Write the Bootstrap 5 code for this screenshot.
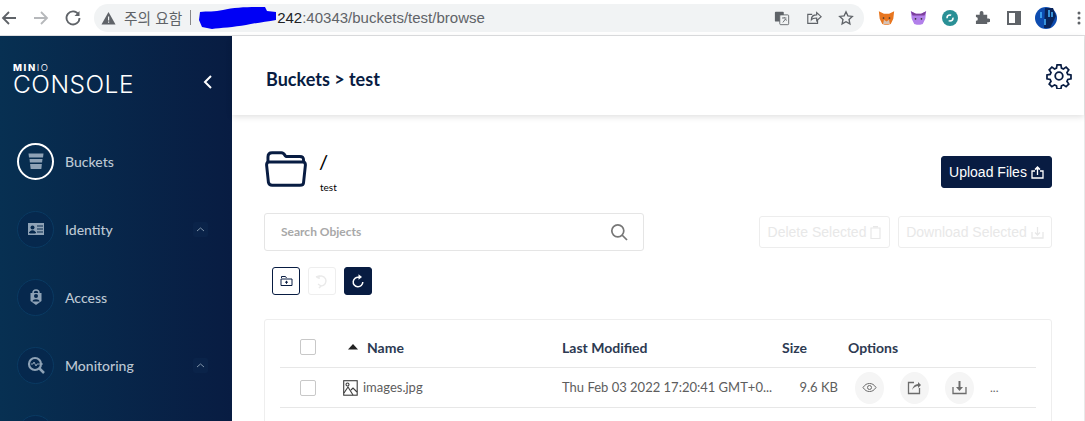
<!DOCTYPE html>
<html lang="ko"><head><meta charset="utf-8"><title>MinIO Console</title>
<link href="https://cdn.jsdelivr.net/npm/bootstrap@5.3.0/dist/css/bootstrap.min.css" rel="stylesheet">
<style>
html,body{height:421px;overflow:hidden;background:#fff;margin:0}
body{font-family:Lato,sans-serif;color:#081c42}
.chrome{height:36px;border-bottom:1px solid #dedfe1;background:#fff}
.nav-ic{width:20px;height:20px;flex:none;color:#5f6368}
.omni{margin-left:11px;width:770px;height:28px;background:#f1f3f4;border-radius:14px;font:15px "Liberation Sans",sans-serif;color:#5f6368;padding-left:7px;flex:none}
.warn-txt{font:14.7px "Noto Sans CJK KR",sans-serif;margin-left:8px;color:#5f6368;white-space:nowrap}
.sep{width:1px;height:15px;background:#888;margin:0 8px}
.url-dark{color:#202124;margin-left:1px}
.scrib{width:77px;height:22px;flex:none}
.omni-end{margin-left:auto;padding-right:10px;gap:16px}
.tool{width:16px;height:16px;flex:none}
.stage{height:385px}
.side{width:232px;flex:none;background:linear-gradient(90deg,#073052,#081c42);color:#fff;overflow:hidden}
.brand{height:74px;margin-top:17px;padding-left:13px;padding-right:19px}
.mini{font:800 9.5px/7px Inter,sans-serif;letter-spacing:1.6px}
.mini i{font-style:normal;font-weight:300}
.cons{font:300 24.5px/24px Inter,sans-serif;letter-spacing:.5px;margin-top:1px}
.menu-row{height:68px;padding:0 24px 0 17px}
.circ{width:37px;height:37px;border-radius:50%;border:1px solid #0a3a62;background:#06284d;margin-right:11px;flex:none}
.circ.on{border:2px solid #fff;background:transparent}
.circ svg{width:18px;height:18px;color:#8ea2b6}
.m-lbl{font-size:14px;color:#bcc7d3;font-weight:500}
.chev{width:15px;height:15px;background:#0a2349;border-radius:2px;color:#7f93a8}
.main{width:853px;flex:none;border-right:1px solid #e9e9e9}
.head{height:79px;box-shadow:0 2px 6px rgba(0,0,0,.12);padding:0 12px 0 34px;position:relative}
.head h1{font:700 18px Lato,sans-serif;margin:6px 0 0;color:#081c42}
.body-pad{padding:0 32px}
.title-row{padding-top:36px;height:98px}
.folder{width:44px;height:37px;margin-right:12px;flex:none}
.slash{font:500 20px/22px Lato,sans-serif;color:#000;margin:-1px 0 0 -1px}
.tname{font:400 10px/12px Lato,sans-serif;color:#000;margin-top:9px}
.btn-up{background:#081c42;border:1px solid #081c42;color:#fff;height:32px;width:111px;font:14px "Liberation Sans",sans-serif;border-radius:3px;padding:0;margin-top:5px}
.srch{width:380px;height:38px;border:1px solid #e5e5e5;border-radius:3px;padding:0 15px 0 16px;font-size:12px;font-weight:700;color:#a8a8a8;background:#fff}
.btn-off{height:32px;border:1px solid #ededed;border-radius:3px;background:#fff;color:#e8e8e8;font:14px "Liberation Sans",sans-serif;padding:0;white-space:nowrap}
.b-del{width:131px}.b-dl{width:154px}
.tools{padding-left:8px;margin-top:16px;gap:8px}
.tbtn{width:28px;height:28px;border-radius:3px;border:1px solid #081c42;background:#fff;padding:0;color:#081c42}
.tbtn.off{border-color:#eee;color:#eaeaea}
.tbtn.solid{background:#081c42;color:#fff}
.tbox{margin-top:24px;border:1px solid #eee;border-top-left-radius:3px;border-top-right-radius:3px;height:110px;padding:0 15px 0 15px}
.trow{border-bottom:1px solid #e7e7e7;height:40px;font-size:13px;color:#5d5d5d}
.trow.h{height:48px;font-weight:700;color:#2d3a52;padding-top:7px;font-size:14px}
.ck{width:16px;height:16px;border:1px solid #c8c8c8;border-radius:2px;background:#fff;margin-left:20px;flex:none}
.c-name{width:219px;margin-left:27px;flex:none}
.c-mod{width:204px;flex:none;white-space:nowrap}
.c-size{width:89px;flex:none;text-align:right;padding-right:17px;font-size:13px;white-space:nowrap}
.rnd{width:29px;height:32px;border-radius:50%;background:#f5f5f5;color:#6c6c6c;flex:none;margin-right:16px}
.rnd svg{width:15px;height:15px}
.ell{font-size:12px;color:#666}
</style></head><body>
<div class="chrome d-flex align-items-center">
 <svg class="nav-ic" viewBox="0 0 20 20" fill="none" stroke="currentColor" stroke-width="1.800"><path d="M16 10H3M9 4l-6 6 6 6"/></svg>
 <svg class="nav-ic" style="margin-left:11px;color:#b6b8bb" viewBox="0 0 20 20" fill="none" stroke="currentColor" stroke-width="1.800"><path d="M3 10h13M10 4l6 6-6 6"/></svg>
 <svg class="nav-ic" style="margin-left:12px" viewBox="0 0 20 20" fill="none" stroke="currentColor" stroke-width="1.800"><path d="M15.500 6.500A6.500 6.500 0 1 0 16.500 10"/><path d="M16.500 3v5h-5" fill="currentColor" stroke="none"/></svg>
 <div class="omni d-flex align-items-center">
  <svg width="15" height="14" viewBox="0 0 15 14" class="flex-none"><path d="M7.500 1L14.500 13.500H.5z" fill="#5f6368"/><path d="M7 5.500h1.200v4H7zM7 10.500h1.200v1.300H7z" fill="#f1f3f4"/></svg>
  <span class="warn-txt">주의 요함</span><span class="sep"></span>
  <svg class="scrib" viewBox="0 0 77 22"><path d="M1 5C8 4 16 5 24 3 36 0 52 0 66 0l2 4 9 1v8c-10 2-22 3-30 5-12 2-26 3-34 4L3 20 0 13z" fill="#0000f5"/></svg>
  <span class="url-dark">242</span><span>:40343/buckets/test/browse</span>
  <div class="omni-end d-flex align-items-center">
   <svg class="tool" viewBox="0 0 18 18"><rect x="1" y="2" width="10" height="11" rx="1" fill="#5f6368"/><rect x="6.500" y="5.500" width="10" height="11" rx="1" fill="#f1f3f4" stroke="#5f6368"/><path d="M9 9h5M11.500 8v1M10 14l3-4 1 2" fill="none" stroke="#5f6368"/></svg>
   <svg class="tool" viewBox="0 0 18 18" fill="none" stroke="#5f6368" stroke-width="1.300"><path d="M13 11v4H2V5h5"/><path d="M6 11c0-4 3-5.500 6-5.500V3l5 4.500-5 4.500V9c-3 0-5 .5-6 2z"/></svg>
   <svg class="tool" viewBox="0 0 18 18" fill="none" stroke="#5f6368" stroke-width="1.500"><path d="M9 2l2.100 4.600 5 .6-3.700 3.400 1 5L9 13.100l-4.400 2.500 1-5L1.900 7.200l5-.6z"/></svg>
  </div>
 </div>
 <div class="d-flex align-items-center" style="margin-left:14px">
  <svg width="17" height="16" viewBox="0 0 20 18"><path d="M1 1l6 3h6l6-3-1 9-3 6-3 1H8l-3-1-3-6z" fill="#e8761f"/><path d="M7 11l3 2 3-2 1 5H6z" fill="#d7c1b3"/><circle cx="6.500" cy="9" r="1" fill="#333"/><circle cx="13.500" cy="9" r="1" fill="#333"/></svg>
  <svg width="17" height="16" style="margin-left:15px" viewBox="0 0 20 18"><path d="M1 1l6 3h6l6-3-1 9-3 6-3 1H8l-3-1-3-6z" fill="#b280ea"/><path d="M1 1l6 3h6l6-3-2 5H3z" fill="#7d3f9c"/><circle cx="6.500" cy="10" r="1" fill="#333"/><circle cx="13.500" cy="10" r="1" fill="#333"/></svg>
  <svg width="16" height="16" style="margin-left:15px" viewBox="0 0 16 16"><circle cx="8" cy="8" r="8" fill="#2a9096"/><circle cx="8" cy="8" r="3" fill="none" stroke="#fff" stroke-width="1.500" stroke-dasharray="6 3"/></svg>
  <svg width="15" height="15" style="margin-left:17px" viewBox="0 0 16 16"><path d="M1 5h4V3a2 2 0 0 1 4 0v2h4v4h1.500a2 2 0 0 1 0 4H13v2H1v-3.500a2 2 0 0 0 0-4z" fill="#5f6368"/></svg>
  <svg width="14" height="14" style="margin-left:17px" viewBox="0 0 14 14"><path d="M0 0h14v14H0zM2 2v10h6V2z" fill="#5f6368" fill-rule="evenodd"/></svg>
  <svg width="22" height="22" style="margin-left:14px" viewBox="0 0 22 22"><circle cx="11" cy="11" r="11" fill="#0d4cb0"/><path d="M10 1h8l3 8-6 12H9z" fill="#08245c"/><path d="M6 5v6M14 3v7M17 5v5M10 12v6" stroke="#45b4ff" stroke-width="1.500"/></svg>
  <svg width="4" height="14" style="margin-left:20px" viewBox="0 0 4 14"><circle cx="2" cy="2" r="1.500" fill="#5f6368"/><circle cx="2" cy="7" r="1.500" fill="#5f6368"/><circle cx="2" cy="12" r="1.500" fill="#5f6368"/></svg>
 </div>
</div>
<div class="stage d-flex">
 <aside class="side">
  <div class="brand d-flex justify-content-between align-items-start">
   <div style="padding-top:11px"><div class="mini">MIN<i>IO</i></div><div class="cons">CONSOLE</div></div>
   <svg width="10" height="14" viewBox="0 0 10 14" style="margin-top:22px" fill="none" stroke="#fff" stroke-width="2"><path d="M8 1L2 7l6 6"/></svg>
  </div>
  <div class="menu-row d-flex align-items-center"><span class="circ on d-flex align-items-center justify-content-center"><svg viewBox="0 0 18 18"><path d="M1.500 1.500h15l-.5 4h-14z" fill="currentColor"/><path d="M2.500 7h13l-.4 3.500H2.900z" fill="currentColor"/><path d="M3.100 12h11.800l-.6 5H3.700z" fill="currentColor"/></svg></span><span class="m-lbl">Buckets</span></div>
  <div class="menu-row d-flex align-items-center"><span class="circ d-flex align-items-center justify-content-center"><svg viewBox="0 0 18 18"><path d="M1 3h16v12H1z" fill="currentColor"/><circle cx="5.500" cy="7.500" r="2" fill="#06284d"/><path d="M2.500 13c0-3 6-3 6 0zM10 6h6M10 9h6M10 12h6" fill="#06284d" stroke="#06284d"/></svg></span><span class="m-lbl flex-grow-1">Identity</span><span class="chev d-flex align-items-center justify-content-center"><svg width="9" height="6" viewBox="0 0 9 6" fill="none" stroke="currentColor"><path d="M1 5l3.500-3L8 5"/></svg></span></div>
  <div class="menu-row d-flex align-items-center"><span class="circ d-flex align-items-center justify-content-center"><svg viewBox="0 0 18 18"><path d="M6 5a3 3 0 0 1 6 0" fill="none" stroke="currentColor" stroke-width="1.500"/><path d="M3.500 5h11v8L9 17l-5.500-4z" fill="currentColor"/><circle cx="9" cy="8" r="2" fill="#06284d"/><path d="M5.500 13.500c0-3 7-3 7 0z" fill="#06284d"/></svg></span><span class="m-lbl">Access</span></div>
  <div class="menu-row d-flex align-items-center"><span class="circ d-flex align-items-center justify-content-center"><svg viewBox="0 0 18 18" fill="none" stroke="currentColor"><circle cx="8" cy="8" r="6" stroke-width="2.200"/><path d="M12 12l5 5" stroke-width="2.500"/><path d="M4 8h2l1-2 2 4 1-2h6"/></svg></span><span class="m-lbl flex-grow-1">Monitoring</span><span class="chev d-flex align-items-center justify-content-center"><svg width="9" height="6" viewBox="0 0 9 6" fill="none" stroke="currentColor"><path d="M1 5l3.500-3L8 5"/></svg></span></div>
  <div class="menu-row d-flex align-items-center"><span class="circ"></span></div>
 </aside>
 <main class="main">
  <header class="head d-flex align-items-center justify-content-between">
   <h1>Buckets &gt; test</h1>
   <svg width="26" height="26" viewBox="0 0 26 26" fill="none" stroke="#081c42" stroke-width="1.800" style="margin-top:1px"><circle cx="13" cy="13" r="3.800"/><path d="M11 1.500h4l.6 3.300 2 .9 2.800-1.900 2.800 2.800-1.900 2.800.9 2 3.300.6v4l-3.300.6-.9 2 1.900 2.800-2.800 2.800-2.800-1.900-2 .9-.6 3.300h-4l-.6-3.300-2-.9-2.800 1.900-2.800-2.800 1.900-2.800-.9-2-3.300-.6v-4l3.300-.6.9-2-1.900-2.800 2.800-2.800 2.800 1.900 2-.9z" transform="translate(.5 .5) scale(.96)"/></svg>
  </header>
  <div class="body-pad">
   <div class="title-row d-flex justify-content-between align-items-start">
    <div class="d-flex">
     <svg class="folder" viewBox="0 0 46 40" fill="none" stroke="#081c42" stroke-width="3.200" stroke-linejoin="round"><path d="M3.500 12V6.500C3.500 3.500 5 2 8 2h10c2 0 3 1 4 3l1 1h15c3 0 4 1 4 4v3"/><path d="M2 15c0-2 1-3 3-3h36c2 0 3 1 3 3l-2 19c0 2-2 3-4 3H8c-2 0-3.500-1-4-3z"/></svg>
     <div><div class="slash">/</div><div class="tname">test</div></div>
    </div>
    <button class="btn btn-up d-flex align-items-center justify-content-center" type="button">Upload Files<svg width="13" height="13" viewBox="0 0 13 13" class="ms-1" fill="none" stroke="#fff" stroke-width="1.300"><path d="M4 5H1v7h11V5H9M6.500 9V1.500"/><path d="M4 3.500L6.500 1 9 3.500" fill="#fff"/></svg></button>
   </div>
   <div class="d-flex justify-content-between align-items-center">
    <div class="srch d-flex align-items-center justify-content-between"><span>Search Objects</span><svg width="18" height="18" viewBox="0 0 18 18" fill="none" stroke="#777" stroke-width="1.700"><circle cx="7.800" cy="7.800" r="6"/><path d="M12 12l5 5"/></svg></div>
    <div class="d-flex gap-2">
     <button class="btn btn-off b-del d-flex align-items-center justify-content-center" type="button">Delete Selected<svg width="11" height="13" viewBox="0 0 11 13" class="ms-1" fill="none" stroke="#e8e8e8" stroke-width="1.200"><path d="M1 2h9v10.500H1zM3 .7h5"/></svg></button>
     <button class="btn btn-off b-dl d-flex align-items-center justify-content-center" type="button">Download Selected<svg width="13" height="13" viewBox="0 0 13 13" class="ms-1" fill="none" stroke="#e8e8e8" stroke-width="1.300"><path d="M1 6v6h11V6M6.500 1v8M4 6.500L6.500 9 9 6.500"/></svg></button>
    </div>
   </div>
   <div class="tools d-flex">
    <button class="tbtn d-flex align-items-center justify-content-center" type="button" aria-label="New folder"><svg width="13" height="12" viewBox="0 0 13 12" fill="none" stroke="currentColor"><path d="M1.500 3V1.500h4l1 1.500M1 4h11v6.500H1z"/><path d="M5 7.200h3M6.500 5.800v3"/></svg></button>
    <button class="tbtn off d-flex align-items-center justify-content-center" type="button" aria-label="Rewind"><svg width="14" height="15" viewBox="0 0 14 15" fill="none" stroke="currentColor" stroke-width="1.500"><path d="M2 4a5 5 0 1 1 4 8M1 3l3-1v3M3 10l3 2-2 2"/></svg></button>
    <button class="tbtn solid d-flex align-items-center justify-content-center" type="button" aria-label="Refresh"><svg width="14" height="14" viewBox="0 0 14 14" fill="none" stroke="currentColor" stroke-width="1.500"><path d="M8 3.300A4.800 4.800 0 1 0 11.800 8"/><path d="M7.500.2L11 3 7.500 5.800z" fill="currentColor" stroke="none"/></svg></button>
   </div>
   <div class="tbox">
    <div class="trow h d-flex align-items-center">
     <span class="ck"></span>
     <span class="d-flex align-items-center flex-none" style="margin-left:32px;width:214px"><svg width="10" height="6" viewBox="0 0 10 6" style="margin-right:9px"><path d="M5 0l5 5.500H0z" fill="#222"/></svg>Name</span>
     <span class="flex-none" style="width:220px">Last Modified</span>
     <span class="flex-none" style="width:66px">Size</span><span>Options</span>
    </div>
    <div class="trow d-flex align-items-center">
     <span class="ck"></span>
     <span class="c-name d-flex align-items-center"><svg width="15" height="16" viewBox="0 0 15 16" fill="none" stroke="#3d3d3d" stroke-width="1.100" style="margin-right:5px;flex:none"><rect x=".7" y=".7" width="13.500" height="14.500"/><circle cx="4.500" cy="4.500" r="1.500"/><path d="M1 13l4-6 5 8M8 10l2-2 4 4"/></svg><span>images.jpg</span></span>
     <span class="c-mod">Thu Feb 03 2022 17:20:41 GMT+0...</span>
     <span class="c-size">9.6 KB</span>
     <span class="rnd d-flex align-items-center justify-content-center"><svg viewBox="0 0 15 15" fill="none" stroke="currentColor"><path d="M1 7.500C3 4.500 5 3.500 7.500 3.500S12 4.500 14 7.500C12 10.500 10 11.500 7.500 11.500S3 10.500 1 7.500z"/><circle cx="7.500" cy="7.500" r="2"/></svg></span>
     <span class="rnd d-flex align-items-center justify-content-center"><svg viewBox="0 0 15 15" fill="none" stroke="currentColor" stroke-width="1.300"><path d="M12.500 8v5.500H1.500v-11H7"/><path d="M5 10c1-4 3-6 6-6V2l3 3-3 3V6c-2 0-4 1-6 4z" fill="currentColor" stroke="none"/></svg></span>
     <span class="rnd d-flex align-items-center justify-content-center"><svg viewBox="0 0 15 15" fill="none" stroke="currentColor" stroke-width="1.300"><path d="M1 7v6.500h13V7"/><path d="M7.500 1v8" stroke-width="2"/><path d="M4 7h7l-3.500 4z" fill="currentColor" stroke="none"/></svg></span>
     <span class="ell">...</span>
    </div>
   </div>
  </div>
 </main>
</div>
</body></html>
